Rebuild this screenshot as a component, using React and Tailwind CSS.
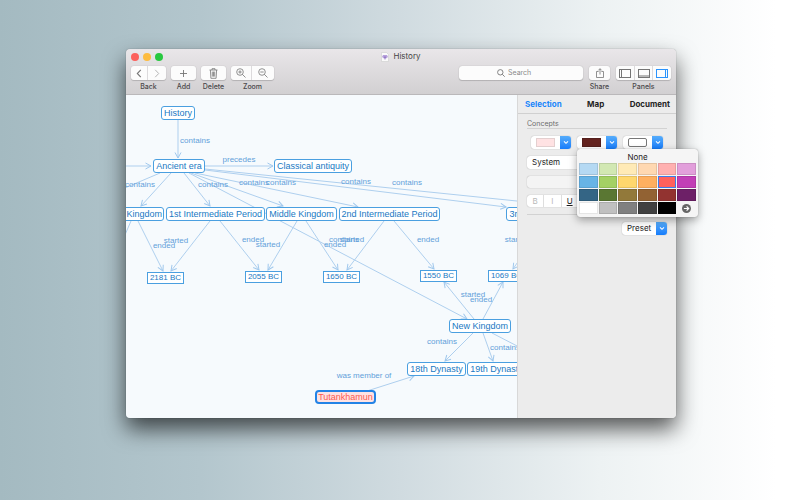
import React, { useState } from 'react';

const nodes = [
  { text: 'History', x: 35, y: 11, w: 34 },
  { text: 'Ancient era', x: 27, y: 64, w: 52 },
  { text: 'Classical antiquity', x: 148, y: 64, w: 78 },
  { text: 'Old Kingdom', x: -18, y: 112, w: 56 },
  { text: '1st Intermediate Period', x: 40, y: 112, w: 99 },
  { text: 'Middle Kingdom', x: 140, y: 112, w: 71 },
  { text: '2nd Intermediate Period', x: 213, y: 112, w: 101 },
  { text: '3rd Intermediate Period', x: 380, y: 112, w: 101 },
  { text: 'New Kingdom', x: 323, y: 224, w: 62 },
  { text: '18th Dynasty', x: 281, y: 267, w: 59 },
  { text: '19th Dynasty', x: 341, y: 267, w: 59 },
];

const dates = [
  { text: '2181 BC', x: 21, y: 177 },
  { text: '2055 BC', x: 119, y: 176 },
  { text: '1650 BC', x: 197, y: 176 },
  { text: '1550 BC', x: 294, y: 175 },
  { text: '1069 BC', x: 362, y: 175 },
];

// x1, y1, x2, y2
const edges = [
  [52, 25, 52, 63],
  [-10, 71, 25, 71],
  [79, 71, 147, 71],
  [34, 78, -20, 101],
  [45, 78, 15, 111],
  [58, 78, 84, 111],
  [65, 78, 157, 111],
  [69, 78, 232, 112],
  [79, 75, 380, 112],
  [79, 74, 420, 109],
  [63, 78, 341, 224],
  [5, 126, -8, 156],
  [12, 126, 37, 176],
  [84, 126, 45, 176],
  [94, 126, 133, 175],
  [171, 126, 142, 175],
  [180, 126, 212, 175],
  [258, 126, 221, 175],
  [268, 126, 308, 174],
  [420, 126, 387, 174],
  [348, 224, 318, 187],
  [357, 224, 377, 187],
  [347, 238, 319, 266],
  [357, 238, 367, 266],
  [366, 238, 420, 266],
  [241, 296, 288, 281],
];

const labels = [
  { text: 'contains', x: 69, y: 46 },
  { text: 'precedes', x: 113, y: 65 },
  { text: 'contains', x: 14, y: 90 },
  { text: 'contains', x: 87, y: 90 },
  { text: 'contains', x: 128, y: 88 },
  { text: 'contains', x: 155, y: 88 },
  { text: 'contains', x: 230, y: 87 },
  { text: 'contains', x: 281, y: 88 },
  { text: 'started', x: 50, y: 146 },
  { text: 'ended', x: 38, y: 151 },
  { text: 'ended', x: 127, y: 145 },
  { text: 'started', x: 142, y: 150 },
  { text: 'contains', x: 218, y: 145 },
  { text: 'started', x: 226, y: 145 },
  { text: 'ended', x: 209, y: 150 },
  { text: 'ended', x: 302, y: 145 },
  { text: 'started', x: 391, y: 145 },
  { text: 'started', x: 347, y: 200 },
  { text: 'ended', x: 355, y: 205 },
  { text: 'contains', x: 316, y: 247 },
  { text: 'contains', x: 379, y: 253 },
  { text: 'was member of', x: 238, y: 281 },
];

const swatches = [
  '#b5d9f3', '#d2e8b3', '#ffeab6', '#ffd8b1', '#ffb0b0', '#e29fdb',
  '#67b4e6', '#a4d165', '#ffd76d', '#ffb060', '#ff605c', '#c23eb6',
  '#346585', '#5a7733', '#92793a', '#926233', '#923330', '#6d2067',
  '#ffffff', '#c0c0c0', '#808080', '#404040', '#000000',
];

const toolButton = 'flex h-[14px] items-center justify-center bg-[#fcfcfc] text-[#757575]';

function ToolGroup({ label, children }) {
  return (
    <div className="flex flex-col items-center gap-[2px]">
      <div className="flex divide-x divide-[#dcdadc] overflow-hidden rounded-[3px] shadow-[0_0_1px_rgba(0,0,0,0.3),0_1px_1px_rgba(0,0,0,0.15)]">
        {children}
      </div>
      <span className="text-[7px] leading-[10px] font-medium text-[#4a484a]">{label}</span>
    </div>
  );
}

function PanelIcon({ d }) {
  return (
    <svg className="h-[9px] w-[12px]" viewBox="0 0 12 9" fill="none" stroke="currentColor">
      <rect x="0.5" y="0.5" width="11" height="8" />
      <path d={d} />
    </svg>
  );
}

function BlueArrow() {
  return (
    <span className="flex h-full w-[11px] shrink-0 items-center justify-center rounded-r-[3px] bg-linear-to-b from-[#55acfb] to-[#147cfb]">
      <svg className="h-[5px] w-[6px]" viewBox="0 0 6 5" fill="none" stroke="white" strokeWidth="1.1">
        <path d="M1 1.3l2 2 2-2" />
      </svg>
    </span>
  );
}

function ColorWell({ label, swatch, onClick }) {
  return (
    <button
      aria-label={label}
      onClick={onClick}
      className="flex h-[13px] w-[40px] items-center rounded-[3px] bg-white shadow-[0_0_1px_rgba(0,0,0,0.4)]"
    >
      <span className="flex flex-1 justify-center">
        <span className={`h-[9px] w-[19px] border ${swatch}`} />
      </span>
      <BlueArrow />
    </button>
  );
}

function MindMap() {
  return (
    <section className="relative min-w-0 flex-1 overflow-hidden rounded-bl-[4px] bg-[#f6fafd] font-['Liberation_Sans',Arial,sans-serif]">
      <svg className="absolute inset-0 h-full w-full" fill="none" stroke="#aecfee" strokeWidth="1">
        <defs>
          <marker id="arrow" viewBox="0 0 8 8" refX="7" refY="4" markerWidth="8" markerHeight="8" orient="auto">
            <path d="M1.5 1L7 4L1.5 7" fill="none" stroke="#a0c8ed" strokeWidth="1" />
          </marker>
        </defs>
        {edges.map(([x1, y1, x2, y2], i) => (
          <line key={i} x1={x1} y1={y1} x2={x2} y2={y2} markerEnd="url(#arrow)" />
        ))}
      </svg>

      {labels.map((l, i) => (
        <span
          key={i}
          className="absolute -translate-x-1/2 -translate-y-1/2 text-[8px] leading-[10px] whitespace-nowrap text-[#629fda]"
          style={{ left: l.x, top: l.y }}
        >
          {l.text}
        </span>
      ))}

      {nodes.map((n) => (
        <div
          key={n.text}
          className="absolute flex h-[14px] items-center justify-center rounded-[3px] border border-[#4a9fe0] bg-white text-[9px] leading-[12px] whitespace-nowrap text-[#2079c3]"
          style={{ left: n.x, top: n.y, width: n.w }}
        >
          {n.text}
        </div>
      ))}

      {dates.map((d) => (
        <div
          key={d.text}
          className="absolute flex h-[12px] w-[37px] items-center justify-center border border-[#4a9fe0] bg-white text-[8px] leading-[10px] whitespace-nowrap text-[#2079c3]"
          style={{ left: d.x, top: d.y }}
        >
          {d.text}
        </div>
      ))}

      <div className="absolute top-[295px] left-[189px] flex h-[14px] w-[61px] items-center justify-center rounded-[4px] border-2 border-[#2383e6] bg-[#ffe2e2] text-[9px] leading-[12px] text-[#fb5a50]">
        Tutankhamun
      </div>
    </section>
  );
}

function ColorPopup({ selected, onSelect }) {
  return (
    <div className="absolute top-[13px] left-0 z-10 w-[121px] rounded-[3px] bg-[#f5f5f5] px-[2px] pt-[3px] pb-[3px] shadow-[0_0_1px_rgba(0,0,0,0.4),0_3px_8px_rgba(0,0,0,0.35)]">
      <button className="block h-[11px] w-full text-center text-[8px] leading-[11px] text-[#222]">None</button>
      <div className="grid grid-cols-6 gap-px">
        {swatches.map((c) => (
          <button
            key={c}
            aria-label={c}
            onClick={() => onSelect(c)}
            className={`h-[12px] border ${selected === c ? 'border-[#3c7be8]' : 'border-black/10'}`}
            style={{ backgroundColor: c }}
          />
        ))}
        <button aria-label="More colors" className="flex h-[12px] items-center justify-center">
          <svg className="h-[9px] w-[9px]" viewBox="0 0 9 9">
            <circle cx="4.5" cy="4.5" r="4.5" fill="#666" />
            <path d="M1.9 4.5h4.6M4.6 2.4l2.1 2.1-2.1 2.1" fill="none" stroke="white" strokeWidth="1.2" />
          </svg>
        </button>
      </div>
    </div>
  );
}

function Inspector() {
  const [open, setOpen] = useState(true);
  const [color, setColor] = useState('#ff605c');

  return (
    <aside className="w-[159px] shrink-0 rounded-br-[4px] border-l border-[#d8d8d8] bg-[#ececec]">
      <nav className="flex h-[19px] items-center justify-between border-b border-[#d0d0d0] pr-[6px] pl-[7px] text-[8px] font-bold text-[#222]">
        <button className="text-[#1a86fb]">Selection</button>
        <button>Map</button>
        <button>Document</button>
      </nav>

      <div className="flex flex-col gap-[7px] px-[9px] pt-[5px]">
        <h2 className="border-b border-[#d2d2d2] text-[7px] leading-[9px] text-[#6c6c6c]">Concepts</h2>

        <div className="flex justify-between px-[4px]">
          <ColorWell label="Fill color" swatch="border-[#e3cfcf] bg-[#ffe2e3]" />
          <div className="relative">
            <ColorWell label="Text color" swatch="border-[#54201d] bg-[#64231f]" onClick={() => setOpen(!open)} />
            {open && <ColorPopup selected={color} onSelect={setColor} />}
          </div>
          <ColorWell label="Border style" swatch="rounded-[2px] border-[#777] bg-white" />
        </div>

        <select
          aria-label="Font"
          className="h-[13px] w-full appearance-none rounded-[3px] bg-white px-[5px] text-[8px] leading-[13px] text-[#222] shadow-[0_0_1px_rgba(0,0,0,0.4)]"
        >
          <option>System</option>
        </select>

        <input
          aria-label="Font style"
          disabled
          className="h-[12px] w-full rounded-[3px] bg-[#f4f4f4] px-[5px] text-[8px] shadow-[0_0_1px_rgba(0,0,0,0.4)]"
        />

        <div className="flex h-[12px] w-[68px] divide-x divide-[#dedede] rounded-[3px] bg-white text-[8px] leading-[12px] text-[#b8b8b8] shadow-[0_0_1px_rgba(0,0,0,0.4)]">
          <button className="flex-1">B</button>
          <button className="flex-1">I</button>
          <button className="flex-1 text-[#222] underline">U</button>
          <button className="flex-1 line-through">S</button>
        </div>

        <hr className="border-[#d2d2d2]" />

        <div className="flex h-[13px] w-[45px] items-center self-end rounded-[3px] bg-white shadow-[0_0_1px_rgba(0,0,0,0.4)]">
          <select
            aria-label="Preset"
            className="w-[34px] appearance-none pl-[5px] text-[8px] leading-[13px] text-[#222] outline-none"
          >
            <option>Preset</option>
          </select>
          <BlueArrow />
        </div>
      </div>
    </aside>
  );
}

export default function App() {
  return (
    <main className="flex min-h-screen bg-[linear-gradient(90deg,#a4bac1_0%,#b3c6cd_25%,#d0dbe0_50%,#edf2f3_75%,#ffffff_97%)] pt-[49px] pr-[124px] pb-[82px] pl-[126px] font-[Inter,sans-serif]">
      <div className="flex min-w-0 flex-1 flex-col rounded-[4px] shadow-[0_0_1px_rgba(0,0,0,0.5),0_11px_22px_rgba(0,0,0,0.65)]">
        <header className="h-[46px] rounded-t-[4px] border-b border-[#bab8ba] bg-linear-to-b from-[#e9e6e9] to-[#d2d0d2]">
          <div className="grid grid-cols-[1fr_auto_1fr] items-center px-[5px] pt-[2px]">
            <div className="flex gap-[4px]">
              <button aria-label="Close" className="size-[8px] rounded-full bg-[#fc605b]" />
              <button aria-label="Minimize" className="size-[8px] rounded-full bg-[#fdbc40]" />
              <button aria-label="Full screen" className="size-[8px] rounded-full bg-[#28c840]" />
            </div>
            <h1 className="flex items-center gap-[4px] text-[8px] leading-[11px] text-[#444]">
              <svg className="h-[10px] w-[8px]" viewBox="0 0 8 10">
                <path d="M0.5 0.5h5l2 2v7h-7z" fill="#fafafa" stroke="#ccc" strokeWidth="0.6" />
                <path d="M2 3h4l1 2L5 6.6 4 8 3 6.6 1 5z" fill="#b7a1dc" />
                <path d="M3 5.2h2" stroke="#8266b8" strokeWidth="0.9" />
              </svg>
              History
            </h1>
          </div>

          <div className="flex justify-between px-[5px] pt-[4px]">
            <div className="flex gap-[5px]">
              <ToolGroup label="Back">
                <button aria-label="Back" className={`${toolButton} w-[17px]`}>
                  <svg className="h-[9px] w-[6px]" viewBox="0 0 6 9" fill="none" stroke="currentColor" strokeWidth="1.1">
                    <path d="M4.8 0.8L1.3 4.5l3.5 3.7" />
                  </svg>
                </button>
                <button aria-label="Forward" className={`${toolButton} w-[18px]`}>
                  <svg className="h-[9px] w-[6px]" viewBox="0 0 6 9" fill="none" stroke="#b5b5b5">
                    <path d="M1.2 0.8l3.5 3.7-3.5 3.7" />
                  </svg>
                </button>
              </ToolGroup>
              <ToolGroup label="Add">
                <button aria-label="Add" className={`${toolButton} w-[25px]`}>
                  <svg className="h-[7px] w-[7px]" viewBox="0 0 7 7" stroke="currentColor" strokeWidth="0.9">
                    <path d="M3.5 0v7M0 3.5h7" />
                  </svg>
                </button>
              </ToolGroup>
              <ToolGroup label="Delete">
                <button aria-label="Delete" className={`${toolButton} w-[25px]`}>
                  <svg className="h-[11px] w-[9px]" viewBox="0 0 9 11" fill="none" stroke="currentColor" strokeWidth="0.8">
                    <path d="M0.5 2h8M3 2V0.7h3V2M1.4 2l0.5 8.3h5.2L7.6 2M3.3 3.6v5M4.5 3.6v5M5.7 3.6v5" />
                  </svg>
                </button>
              </ToolGroup>
              <ToolGroup label="Zoom">
                <button aria-label="Zoom in" className={`${toolButton} w-[21px]`}>
                  <svg className="h-[10px] w-[10px]" viewBox="0 0 10 10" fill="none" stroke="currentColor" strokeWidth="0.8">
                    <circle cx="4" cy="4" r="3.3" />
                    <path d="M6.4 6.4L9.5 9.5M2.3 4h3.4M4 2.3v3.4" />
                  </svg>
                </button>
                <button aria-label="Zoom out" className={`${toolButton} w-[22px]`}>
                  <svg className="h-[10px] w-[10px]" viewBox="0 0 10 10" fill="none" stroke="currentColor" strokeWidth="0.8">
                    <circle cx="4" cy="4" r="3.3" />
                    <path d="M6.4 6.4L9.5 9.5M2.3 4h3.4" />
                  </svg>
                </button>
              </ToolGroup>
            </div>

            <div className="flex gap-[6px]">
              <label className="flex h-[14px] w-[124px] items-center gap-[3px] rounded-[3px] bg-[#fcfcfc] pl-[38px] text-[#777] shadow-[0_0_1px_rgba(0,0,0,0.3),0_1px_1px_rgba(0,0,0,0.15)]">
                <svg className="h-[8px] w-[8px] shrink-0" viewBox="0 0 8 8" fill="none" stroke="currentColor" strokeWidth="0.9">
                  <circle cx="3.3" cy="3.3" r="2.7" />
                  <path d="M5.3 5.3l2.4 2.4" />
                </svg>
                <input
                  aria-label="Search"
                  type="text"
                  placeholder="Search"
                  className="w-full min-w-0 bg-transparent text-[7px] outline-none placeholder:text-[#8a8a8a]"
                />
              </label>
              <ToolGroup label="Share">
                <button aria-label="Share" className={`${toolButton} w-[21px]`}>
                  <svg className="h-[10px] w-[8px]" viewBox="0 0 8 10" fill="none" stroke="currentColor" strokeWidth="0.8">
                    <path d="M2.6 3.5H0.5v6h7v-6H5.4M4 6.5V0.8M2.3 2.4L4 0.7l1.7 1.7" />
                  </svg>
                </button>
              </ToolGroup>
              <ToolGroup label="Panels">
                <button aria-label="Left panel" className={`${toolButton} w-[19px]`}>
                  <PanelIcon d="M2.5 0.5v8" />
                </button>
                <button aria-label="Bottom panel" className={`${toolButton} w-[18px]`}>
                  <PanelIcon d="M0.5 7h11" />
                </button>
                <button aria-label="Right panel" className="flex h-[14px] w-[18px] items-center justify-center bg-[#fcfcfc] text-[#2b93fc]">
                  <PanelIcon d="M9.5 0.5v8" />
                </button>
              </ToolGroup>
            </div>
          </div>
        </header>

        <div className="flex flex-1">
          <MindMap />
          <Inspector />
        </div>
      </div>
    </main>
  );
}
